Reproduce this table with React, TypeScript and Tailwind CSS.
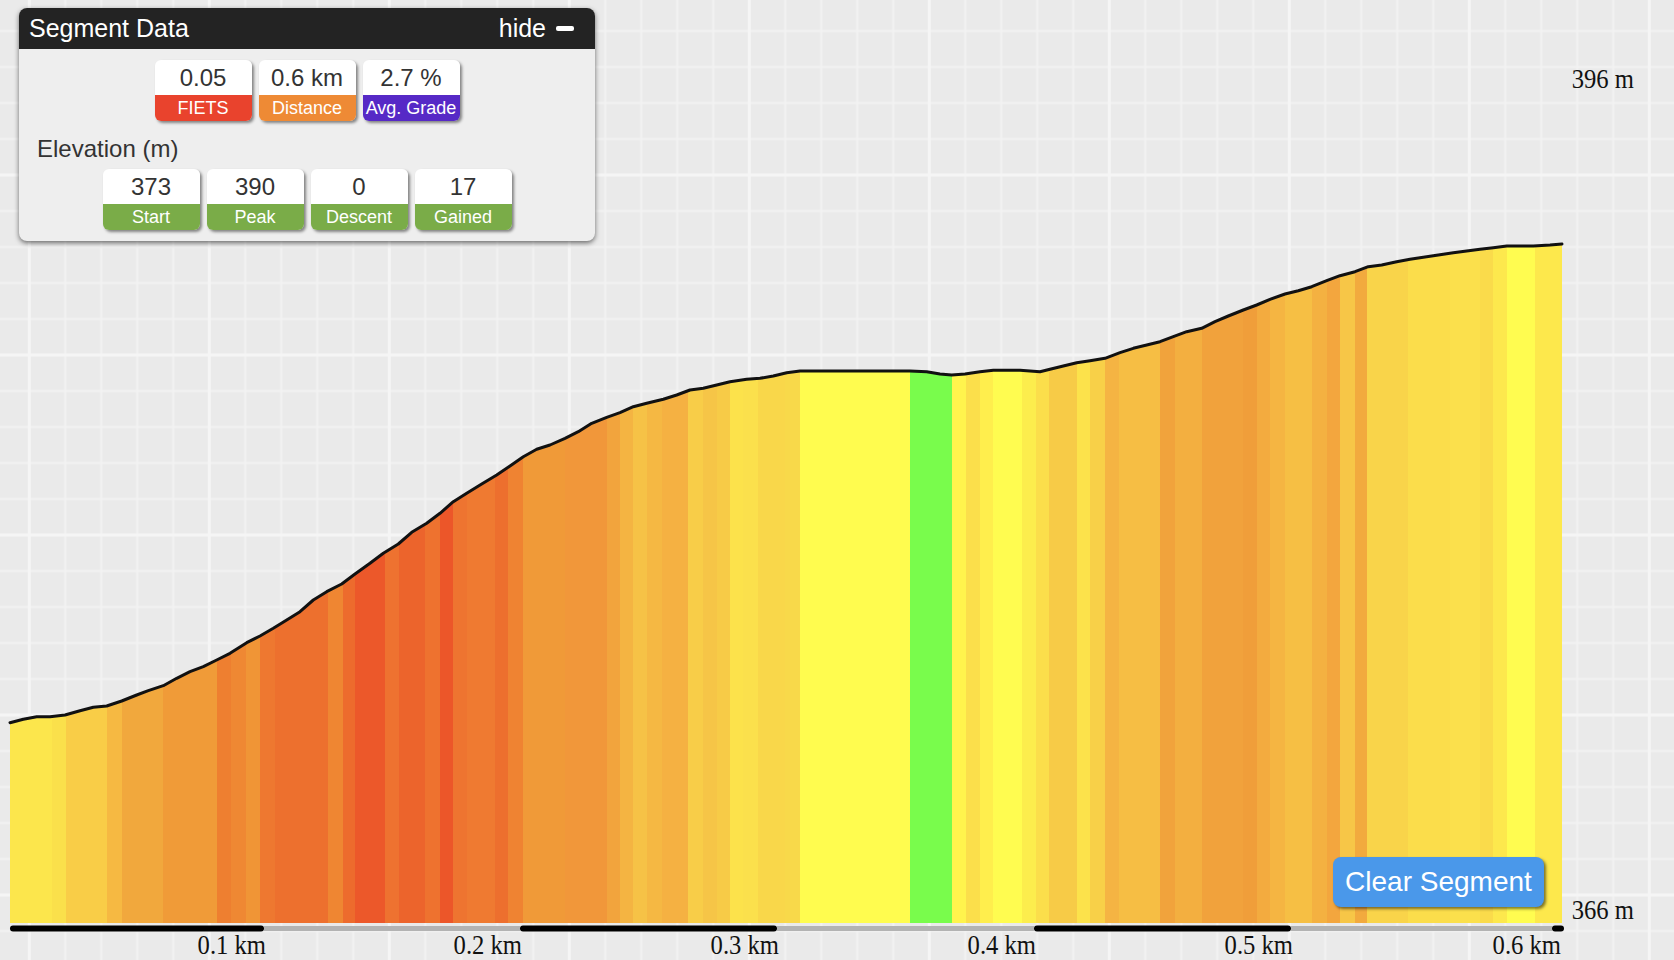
import React from "react";

const END = 1562;
const BASE = 923;

// grade colour bands, [start x, colour]; each band ends where the next starts
const bands: [number, string][] = [
  [10, "#fce64c"], [52, "#fae04b"], [66, "#f9cd47"], [107, "#f6b942"], [122, "#f1a83d"],
  [163, "#f09b38"], [217, "#ee7f30"], [231, "#ef8833"], [246, "#f09536"], [260, "#ee7830"],
  [275, "#ed702e"], [328, "#ef8632"], [343, "#ed6b2d"], [355, "#ec582a"], [385, "#ee7230"],
  [399, "#ec642c"], [425, "#ee722f"], [440, "#ec5629"], [453, "#ee7430"], [467, "#ef7a31"],
  [495, "#ed6f2e"], [508, "#ef8332"], [523, "#f09a38"], [565, "#f1973a"], [607, "#f2a43d"],
  [620, "#f4b442"], [633, "#f6c246"], [647, "#f5b843"], [662, "#f5b142"], [688, "#f8cd48"],
  [703, "#f6c547"], [717, "#f7cb47"], [730, "#fce24b"], [743, "#fbe04c"], [758, "#f9d74a"],
  [785, "#f8d94a"], [800, "#fffc4f"], [910, "#79fc4c"], [952, "#fff44d"], [966, "#fbdf4b"],
  [980, "#ffee4d"], [993, "#fffc50"], [1022, "#fced4d"], [1036, "#fbde4b"], [1049, "#f7cb47"],
  [1077, "#fce24b"], [1090, "#f8d048"], [1105, "#f5b443"], [1119, "#f6be44"], [1160, "#f1a33c"],
  [1175, "#f3af40"], [1202, "#f1a23c"], [1243, "#f09e3a"], [1257, "#f3ab3f"], [1270, "#f5b542"],
  [1285, "#f6bf44"], [1312, "#f4b141"], [1327, "#f3a63e"], [1340, "#f7c647"], [1355, "#f2aa3e"],
  [1367, "#f9d44a"], [1408, "#fbdd4b"], [1450, "#fbe04c"], [1480, "#fadb4b"], [1493, "#fde84d"],
  [1507, "#fffc50"], [1535, "#fde84c"],
];

const profile: [number, number][] = [
  [10, 722.7], [23.3, 719.3], [36.7, 716.7], [50, 716.7], [65, 715], [80, 710.7], [93.3, 707.3],
  [106.7, 706], [121.7, 701], [136.7, 695], [148.3, 690.7], [163.3, 685.7], [176.7, 678.3],
  [190, 671.7], [203.3, 666.7], [216.7, 660], [230, 653.3], [246.7, 642.7], [260, 636],
  [273.3, 628.3], [286.7, 620], [300, 611.7], [313.3, 600], [326.7, 591.7], [341.7, 584],
  [355, 574], [370, 563.3], [383.3, 553.3], [398.3, 544], [411.7, 532.3], [426.7, 523.3],
  [440, 513.3], [453.3, 501.7], [466.7, 493.3], [481.7, 484], [496.7, 475], [510, 466],
  [523.3, 456.7], [536.7, 449.3], [550, 445], [565, 438.3], [578.3, 431.7], [591.7, 423.3],
  [606.7, 417.3], [620, 412.7], [633.3, 406.7], [646.7, 403.3], [663.3, 399.3], [676.7, 395],
  [690, 390], [703.3, 388.3], [716.7, 385], [730, 381.7], [746.7, 379.3], [760, 378.3],
  [773.3, 376], [786.7, 372.7], [800, 371], [910, 371], [926.7, 371.7], [940, 374],
  [951.7, 375], [965, 374], [980, 371.7], [993.3, 370.3], [1020, 370.3], [1040, 371.7],
  [1050, 369.3], [1063.3, 366], [1076.7, 362.7], [1090, 360.7], [1105, 358.3], [1120, 352.7],
  [1133.3, 348.3], [1146.7, 345], [1160, 341.7], [1173.3, 336.7], [1186.7, 331.7],
  [1201.7, 328.3], [1215, 321.7], [1228.3, 316], [1243.3, 310], [1256.7, 305], [1270, 299.3],
  [1285, 294], [1298.3, 290.7], [1311.7, 286.7], [1326.7, 280.7], [1340, 275.7], [1355, 271.7],
  [1368.3, 266.7], [1381.7, 265], [1396.7, 261.7], [1410, 259.3], [1423.3, 257.3],
  [1438.3, 255], [1453.3, 252.7], [1466.7, 251], [1480, 249.3], [1493.3, 247.7],
  [1506.7, 246], [1533.3, 246], [1550, 245], [1562, 244],
];

const axis: [number, number, boolean][] = [
  [10, 264, true], [264, 520, false], [520, 777, true], [777, 1034, false],
  [1034, 1291, true], [1291, 1552, false], [1552, 1564, true],
];

const kmLabels: [number, string][] = [
  [266, "0.1 km"], [522, "0.2 km"], [779, "0.3 km"], [1036, "0.4 km"], [1293, "0.5 km"], [1561, "0.6 km"],
];

function Chart() {
  const line = profile.map((p) => p.join(",")).join(" ");
  const area = line + ` ${END},${BASE} 10,${BASE}`;
  const minors = [36, 72, 108, 144];

  return (
    <svg width={1674} height={960} className="block">
      <defs>
        <pattern id="grid" patternUnits="userSpaceOnUse" x={27.8} y={-6.5} width={180} height={180}>
          <rect width={180} height={180} fill="#eaeaea" />
          {minors.map((v) => (
            <rect key={"v" + v} x={v + 0.5} y={0} width={2} height={180} fill="#f2f2f2" />
          ))}
          {minors.map((v) => (
            <rect key={"h" + v} x={0} y={v + 0.5} width={180} height={2} fill="#f2f2f2" />
          ))}
          <rect x={0} y={0} width={3} height={180} fill="#f5f5f5" />
          <rect x={0} y={0} width={180} height={3} fill="#f5f5f5" />
        </pattern>
        <clipPath id="area">
          <polygon points={area} />
        </clipPath>
      </defs>

      <rect width={1674} height={960} fill="url(#grid)" />

      <g clipPath="url(#area)">
        {bands.map(([x, c], i) => {
          const next = i + 1 < bands.length ? bands[i + 1][0] : END;
          return <rect key={i} x={x} y={200} width={next - x + 0.6} height={BASE - 200} fill={c} />;
        })}
      </g>

      <polyline points={line} fill="none" stroke="#111" strokeWidth={3} strokeLinejoin="round" strokeLinecap="round" />

      {axis.map(([a, b, dark], i) =>
        dark ? (
          <rect key={i} x={a} y={925.5} width={b - a} height={6} rx={3} fill="#000" />
        ) : (
          <rect key={i} x={a} y={926} width={b - a} height={5} fill="#b3b3b3" />
        )
      )}

      <g fontFamily="'Liberation Serif', 'Times New Roman', serif" fontSize={28} fill="#111">
        <text transform="translate(1634,88) scale(0.88,1)" textAnchor="end">396 m</text>
        <text transform="translate(1634,919) scale(0.88,1)" textAnchor="end">366 m</text>
        {kmLabels.map(([x, t]) => (
          <text key={t} transform={`translate(${x},954) scale(0.88,1)`} textAnchor="end">
            {t}
          </text>
        ))}
      </g>
    </svg>
  );
}

function Stat({ value, label, color }: { value: string; label: string; color: string }) {
  return (
    <div className="w-[97px] rounded-[6px] overflow-hidden shadow-[2px_2px_3px_rgba(0,0,0,0.45)]">
      <div className="h-[35px] bg-white flex items-center justify-center text-[24px] text-[#333]">
        {value}
      </div>
      <div className={"h-[26px] flex items-center justify-center text-[18px] text-white " + color}>
        {label}
      </div>
    </div>
  );
}

export default function App() {
  return (
    <div className="relative w-[1674px] h-[960px] overflow-hidden font-['Liberation_Sans',Arial,sans-serif]">
      <Chart />

      <div className="absolute left-[19px] top-[8px] w-[576px] rounded-[8px] bg-[#eeeeee] shadow-[0_2px_5px_rgba(0,0,0,0.55)]">
        <div className="h-[41px] rounded-t-[8px] bg-[#232323] flex items-center justify-between pl-[10px] pr-[21px] text-white text-[25px]">
          <span>Segment Data</span>
          <span className="flex items-center gap-[10px]">
            hide
            <span className="w-[18px] h-[5px] rounded-[2px] bg-white" />
          </span>
        </div>

        <div className="pt-[11px] pb-[11px]">
          <div className="flex justify-center gap-[7px]">
            <Stat value="0.05" label="FIETS" color="bg-[#e9432d]" />
            <Stat value="0.6 km" label="Distance" color="bg-[#ee8a35]" />
            <Stat value="2.7 %" label="Avg. Grade" color="bg-[#5629c6]" />
          </div>

          <div className="mt-[14px] mb-[6px] pl-[18px] h-[28px] text-[24px] leading-[28px] text-[#333]">
            Elevation (m)
          </div>

          <div className="flex justify-center gap-[7px]">
            <Stat value="373" label="Start" color="bg-[#7aac48]" />
            <Stat value="390" label="Peak" color="bg-[#7aac48]" />
            <Stat value="0" label="Descent" color="bg-[#7aac48]" />
            <Stat value="17" label="Gained" color="bg-[#7aac48]" />
          </div>
        </div>
      </div>

      <button className="absolute left-[1333px] top-[857px] w-[211px] h-[50px] rounded-[8px] bg-[#4a98ea] text-white text-[28px] shadow-[2px_2px_3px_rgba(0,0,0,0.5)]">
        Clear Segment
      </button>
    </div>
  );
}
